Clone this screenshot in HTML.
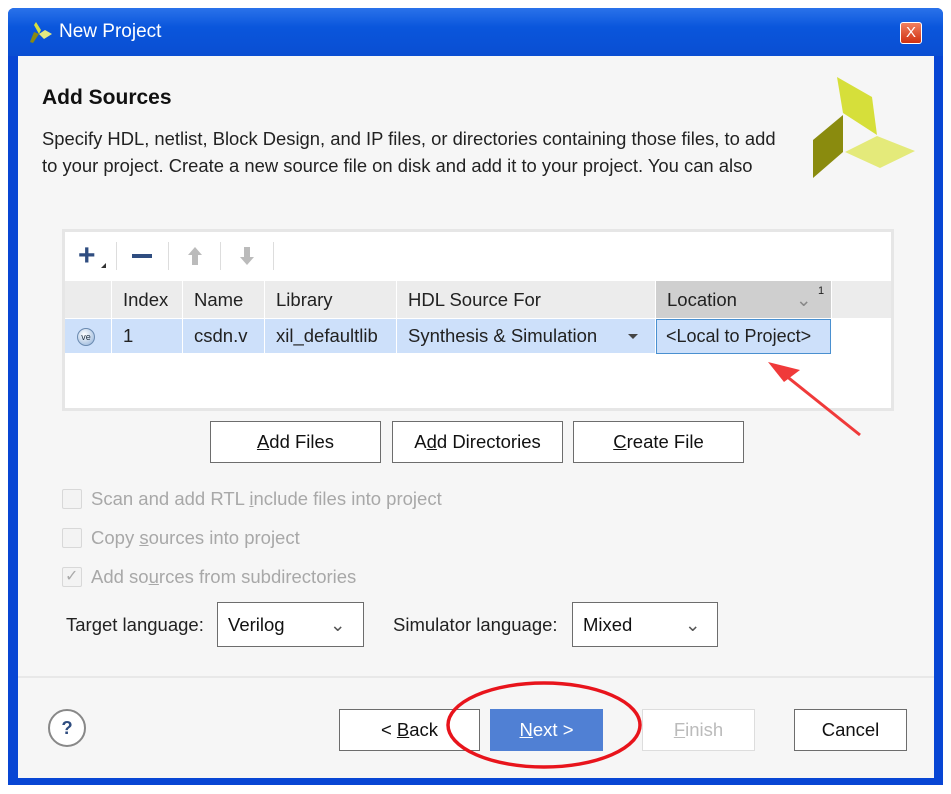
<!DOCTYPE html>
<html><head><meta charset="utf-8"><style>
*{margin:0;padding:0;box-sizing:border-box}
body{width:951px;height:794px;background:#fff;position:relative;overflow:hidden;font-family:"Liberation Sans",sans-serif;font-size:18.5px;color:#222}
.a{position:absolute}
.btn{position:absolute;background:#fff;border:1px solid #6d6d6d;text-align:center;font-size:18.5px;color:#111}
.cb{position:absolute;width:20px;height:20px;border:1px solid #d8d8d8;background:#f3f3f3;border-radius:2px}
.gl{color:#a8a8a8;font-size:18.5px}
.th{position:absolute;top:281px;height:37px;line-height:37px;padding-left:11px;border-right:1px solid #fff;white-space:nowrap}
.td{position:absolute;top:319px;height:34px;line-height:34px;padding-left:11px;border-right:1px solid #fff;white-space:nowrap}
</style></head><body>
<div class="a" style="left:8px;top:8px;width:935px;height:777px;background:#0846d4;border-radius:6px 6px 0 0"></div>
<div class="a" style="left:8px;top:8px;width:935px;height:48px;background:linear-gradient(#2a72ea,#0a56dc 40%,#0a4ed2);border-radius:6px 6px 0 0"></div>
<svg class="a" style="left:28px;top:20px" width="26" height="24" viewBox="0 0 26 24"><path d="M8 2 L13 10 L11 14 L6 5Z" fill="#d8e03c"/><path d="M2 22 L6 12 L11 14 L5 23Z" fill="#8a8a10"/><path d="M11 14 L17 10 L24 14 L16 19Z" fill="#e4ea80"/></svg>
<div class="a" style="left:59px;top:21px;color:#fff;font-size:19px">New Project</div>
<div class="a" style="left:900px;top:22px;width:22px;height:22px;background:linear-gradient(#f08060,#d03010);border:1px solid #fff;border-radius:3px;color:#fff;font-size:15px;text-align:center;line-height:20px">X</div>
<div class="a" style="left:18px;top:56px;width:916px;height:722px;background:#f6f6f6"></div>
<div class="a" style="left:42px;top:86px;font-weight:bold;font-size:21px;color:#111">Add Sources</div>
<div class="a" style="left:42px;top:125px;line-height:27px;font-size:18.4px;width:800px;white-space:nowrap">Specify HDL, netlist, Block Design, and IP files, or directories containing those files, to add<br>to your project. Create a new source file on disk and add it to your project. You can also</div>
<svg class="a" style="left:0;top:0" width="951" height="200"><path d="M837 77 L872 97 L877 135 L843 113Z" fill="#d6df3a"/><path d="M843 115 L843 152 L813 178 L813 140Z" fill="#8a8b0e"/><path d="M845 152 L877 136 L915 151 L880 168Z" fill="#e4ea7a"/></svg>
<!-- table -->
<div class="a" style="left:62px;top:229px;width:832px;height:182px;background:#fff;border:3px solid #e6e6e6"></div>
<div class="a" style="left:65px;top:281px;width:826px;height:37px;background:#ececec"></div>
<div class="a" style="left:65px;top:319px;width:591px;height:34px;background:#cde0fa"></div>
<div class="a" style="left:78px;top:243px;font-size:30px;font-weight:bold;color:#2f4d80;line-height:26px">+</div>
<div class="a" style="left:101px;top:263px;width:0;height:0;border-left:5px solid transparent;border-bottom:5px solid #333"></div>
<div class="a" style="left:116px;top:242px;width:1px;height:28px;background:#ddd"></div>
<div class="a" style="left:132px;top:254px;width:20px;height:4px;background:#2f4d80"></div>
<div class="a" style="left:168px;top:242px;width:1px;height:28px;background:#ddd"></div>
<svg class="a" style="left:186px;top:246px" width="18" height="20"><path d="M9 1 L16 9 L12 9 L12 19 L6 19 L6 9 L2 9Z" fill="#bbb"/></svg>
<div class="a" style="left:220px;top:242px;width:1px;height:28px;background:#ddd"></div>
<svg class="a" style="left:238px;top:246px" width="18" height="20"><path d="M9 19 L16 11 L12 11 L12 1 L6 1 L6 11 L2 11Z" fill="#bbb"/></svg>
<div class="a" style="left:273px;top:242px;width:1px;height:28px;background:#ddd"></div>
<div class="th" style="left:65px;width:47px"></div>
<div class="th" style="left:112px;width:71px">Index</div>
<div class="th" style="left:183px;width:82px">Name</div>
<div class="th" style="left:265px;width:132px">Library</div>
<div class="th" style="left:397px;width:259px">HDL Source For</div>
<div class="th" style="left:656px;width:176px;background:#cfcfcf">Location<span style="position:absolute;left:140px;color:#888">&#8964;</span><span style="position:absolute;left:162px;top:-8px;font-size:11px">1</span></div>
<div class="td" style="left:65px;width:47px"><div style="position:absolute;left:12px;top:9px;width:18px;height:18px;border-radius:50%;background:radial-gradient(circle at 40% 35%,#fff,#8fb0d8);border:1px solid #6a8ab0;font-size:9px;line-height:16px;text-align:center;color:#234">ve</div></div>
<div class="td" style="left:112px;width:71px">1</div>
<div class="td" style="left:183px;width:82px">csdn.v</div>
<div class="td" style="left:265px;width:132px">xil_defaultlib</div>
<div class="td" style="left:397px;width:259px">Synthesis &amp; Simulation<span style="position:absolute;left:231px;top:15px;border-left:5px solid transparent;border-right:5px solid transparent;border-top:5px solid #444"></span></div>
<div class="a" style="left:656px;top:319px;width:175px;height:35px;background:#cde0fa;border:1px solid #4a90d0;line-height:32px;padding-left:9px;white-space:nowrap;font-size:18px">&lt;Local to Project&gt;</div>
<div class="btn" style="left:210px;top:421px;width:171px;height:42px;line-height:40px"><u>A</u>dd Files</div>
<div class="btn" style="left:392px;top:421px;width:171px;height:42px;line-height:40px">A<u>d</u>d Directories</div>
<div class="btn" style="left:573px;top:421px;width:171px;height:42px;line-height:40px"><u>C</u>reate File</div>
<div class="cb" style="left:62px;top:489px"></div><div class="a gl" style="left:91px;top:488px">Scan and add RTL <u>i</u>nclude files into project</div>
<div class="cb" style="left:62px;top:528px"></div><div class="a gl" style="left:91px;top:527px">Copy <u>s</u>ources into project</div>
<div class="cb" style="left:62px;top:567px"></div><div class="a" style="left:65px;top:566px;color:#aaa;font-size:16px">&#10003;</div><div class="a gl" style="left:91px;top:566px">Add so<u>u</u>rces from subdirectories</div>
<div class="a" style="left:66px;top:614px">Target language:</div>
<div class="btn" style="left:217px;top:602px;width:147px;height:45px;text-align:left;padding-left:10px;line-height:43px">Verilog<span style="position:absolute;left:112px;color:#555">&#8964;</span></div>
<div class="a" style="left:393px;top:614px">Simulator language:</div>
<div class="btn" style="left:572px;top:602px;width:146px;height:45px;text-align:left;padding-left:10px;line-height:43px">Mixed<span style="position:absolute;left:112px;color:#555">&#8964;</span></div>
<div class="a" style="left:18px;top:676px;width:916px;height:2px;background:#e8e8e8"></div>
<div class="a" style="left:48px;top:709px;width:38px;height:38px;border:2px solid #888;border-radius:50%;text-align:center;line-height:34px;font-weight:bold;color:#2f4d80;background:#fff">?</div>
<div class="btn" style="left:339px;top:709px;width:141px;height:42px;line-height:40px">&lt; <u>B</u>ack</div>
<div class="btn" style="left:490px;top:709px;width:113px;height:42px;line-height:40px;background:#5080d4;border-color:#5080d4;color:#fff"><u>N</u>ext &gt;</div>
<div class="btn" style="left:642px;top:709px;width:113px;height:42px;line-height:40px;border-color:#ddd;color:#bbb"><u>F</u>inish</div>
<div class="btn" style="left:794px;top:709px;width:113px;height:42px;line-height:40px">Cancel</div>
<svg class="a" style="left:0;top:0" width="951" height="794"><ellipse cx="544" cy="725" rx="96" ry="42" fill="none" stroke="#e8141c" stroke-width="3.5"/><path d="M860 435 L785 375" stroke="#f03a3a" stroke-width="3"/><path d="M768 362 L800 370 L784 382Z" fill="#f03a3a"/></svg>
</body></html>
